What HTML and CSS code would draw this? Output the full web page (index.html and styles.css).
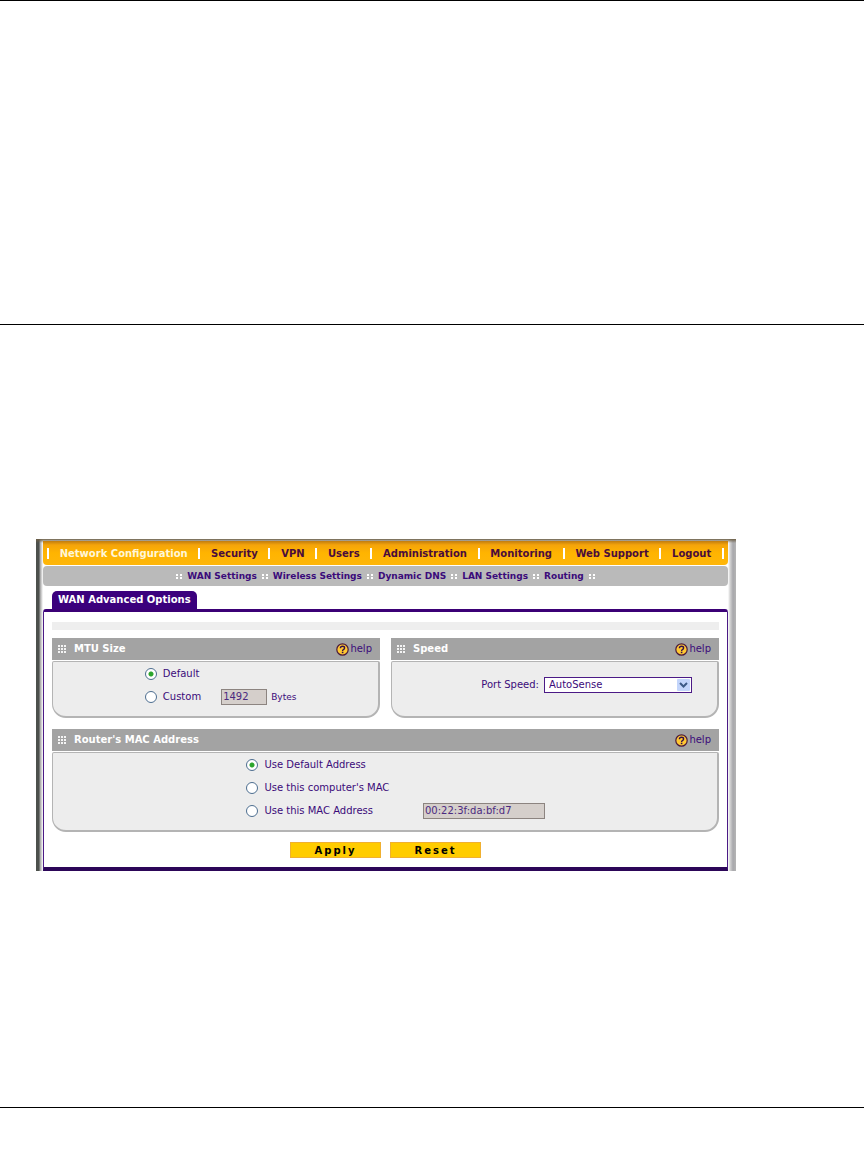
FILE: index.html
```html
<!DOCTYPE html>
<html lang="en">
<head>
    <meta charset="UTF-8">
    <meta name="viewport" content="width=device-width, initial-scale=1.0">
    <link rel="stylesheet" href="styles.css">
    <title>WAN Advanced Options</title>
</head>
<body>
    <svg class="sprites" aria-hidden="true">
        <symbol id="help-icon" viewBox="0 0 13 13">
            <circle cx="6.5" cy="6.5" r="5.7" fill="#ffc832" stroke="#4a1a3c" stroke-width="1.2"/>
            <path d="M4.4 5.2 Q4.4 3.3 6.5 3.3 Q8.6 3.3 8.6 5 Q8.6 6 7.5 6.5 Q6.6 7 6.6 7.9" fill="none" stroke="#33104a" stroke-width="1.4"/>
            <rect x="5.8" y="8.7" width="1.6" height="1.5" fill="#33104a"/>
        </symbol>
        <symbol id="grip-icon" viewBox="0 0 8 8">
            <path d="M0 1h2M3 1h2M6 1h2M0 4h2M3 4h2M6 4h2M0 7h2M3 7h2M6 7h2" stroke="#f4f4f4" stroke-width="2"/>
        </symbol>
        <symbol id="dots-icon" viewBox="0 0 6 5">
            <path d="M0 1h2M4 1h2M0 4h2M4 4h2" stroke="#fff" stroke-width="2"/>
        </symbol>
    </svg>

    <div class="section top-section"></div>
    <div class="section main-section">
        <div class="frame">
            <nav class="menu">
                <a href="#" class="active">Network Configuration</a>
                <a href="#">Security</a>
                <a href="#">VPN</a>
                <a href="#">Users</a>
                <a href="#">Administration</a>
                <a href="#">Monitoring</a>
                <a href="#">Web Support</a>
                <a href="#">Logout</a>
            </nav>
            <nav class="submenu">
                <svg class="dots"><use href="#dots-icon"/></svg>
                <a href="#">WAN Settings</a>
                <svg class="dots"><use href="#dots-icon"/></svg>
                <a href="#">Wireless Settings</a>
                <svg class="dots"><use href="#dots-icon"/></svg>
                <a href="#">Dynamic DNS</a>
                <svg class="dots"><use href="#dots-icon"/></svg>
                <a href="#">LAN Settings</a>
                <svg class="dots"><use href="#dots-icon"/></svg>
                <a href="#">Routing</a>
                <svg class="dots"><use href="#dots-icon"/></svg>
            </nav>
            <h1 class="tab">WAN Advanced Options</h1>
            <form class="panel">
                <div class="message"></div>
                <div class="cards">
                    <div class="card">
                        <div class="card-head">
                            <svg class="grip"><use href="#grip-icon"/></svg>
                            <h2>MTU Size</h2>
                            <a href="#" class="help"><svg><use href="#help-icon"/></svg>help</a>
                        </div>
                        <div class="card-body mtu">
                            <div class="row">
                                <input type="radio" name="mtu" id="mtu-default" checked>
                                <label for="mtu-default">Default</label>
                            </div>
                            <div class="row">
                                <input type="radio" name="mtu" id="mtu-custom">
                                <label for="mtu-custom">Custom</label>
                                <input type="text" id="mtu-bytes" class="field" value="1492" disabled>
                                <label for="mtu-bytes" class="unit">Bytes</label>
                            </div>
                        </div>
                    </div>
                    <div class="card">
                        <div class="card-head">
                            <svg class="grip"><use href="#grip-icon"/></svg>
                            <h2>Speed</h2>
                            <a href="#" class="help"><svg><use href="#help-icon"/></svg>help</a>
                        </div>
                        <div class="card-body speed">
                            <label for="port-speed">Port Speed:</label>
                            <div class="select">
                                <select id="port-speed">
                                    <option>AutoSense</option>
                                </select>
                                <svg class="arrow" viewBox="0 0 13 12">
                                    <rect width="13" height="12" rx="1" fill="#c3d5fb"/>
                                    <path d="M3 4l3.5 3.5L10 4" fill="none" stroke="#3d5a86" stroke-width="2"/>
                                </svg>
                            </div>
                        </div>
                    </div>
                    <div class="card wide">
                        <div class="card-head">
                            <svg class="grip"><use href="#grip-icon"/></svg>
                            <h2>Router's MAC Address</h2>
                            <a href="#" class="help"><svg><use href="#help-icon"/></svg>help</a>
                        </div>
                        <div class="card-body mac">
                            <div class="row">
                                <input type="radio" name="mac" id="mac-default" checked>
                                <label for="mac-default">Use Default Address</label>
                            </div>
                            <div class="row">
                                <input type="radio" name="mac" id="mac-computer">
                                <label for="mac-computer">Use this computer's MAC</label>
                            </div>
                            <div class="row">
                                <input type="radio" name="mac" id="mac-custom">
                                <label for="mac-custom">Use this MAC Address</label>
                                <input type="text" class="field" aria-label="MAC address" value="00:22:3f:da:bf:d7" disabled>
                            </div>
                        </div>
                    </div>
                </div>
                <div class="buttons">
                    <button type="button">Apply</button>
                    <button type="reset">Reset</button>
                </div>
            </form>
        </div>
    </div>
    <div class="section"></div>
</body>
</html>
```
FILE: styles.css
```css
*{
    margin: 0;
    padding: 0;
    box-sizing: border-box;
}
body{
    background-color: white;
    color: #3b0b7a;
    font-family: Verdana, "DejaVu Sans", sans-serif;
    font-size: 10px;
    line-height: 14px;
}
a{
    color: inherit;
    text-decoration: none;
}
.sprites{
    display: none;
}
.section{
    border-top: 1px solid black;
}
.top-section{
    padding-top: 323px;
}
.main-section{
    padding: 214px 128px 236px 36px;
}
.frame{
    padding: 2px 8px 0 7px;
    background:
        linear-gradient(#6d6048, rgba(160, 150, 130, 0)) top / 100% 4px no-repeat,
        linear-gradient(to right, #4c504c 3px, #a0a0a0 4px, #fff 7px) left / 7px 100% no-repeat,
        linear-gradient(to right, #fff, #d4d4d4 2px, #a8a8ac 5px, #b4b4b4) right / 8px 100% no-repeat;
}
.menu{
    display: flex;
    justify-content: space-between;
    align-items: center;
    height: 24px;
    padding: 0 4px;
    border-radius: 0 0 4px 4px;
    background: linear-gradient(#c07c10, #f5a40a 4px, #ffb400 12px, #ffb60a);
    color: #4a0c3c;
    font-weight: bold;
}
.menu a{
    flex-grow: 1;
    border-left: 2px solid white;
    line-height: 11px;
    text-align: center;
}
.menu a:last-child{
    border-right: 2px solid white;
}
.menu .active{
    color: #fff6d8;
}
.submenu{
    display: flex;
    justify-content: center;
    align-items: center;
    gap: 5px;
    height: 20px;
    margin-top: 1px;
    border-radius: 4px;
    background-color: #bababa;
    font-size: 9px;
    font-weight: bold;
}
.dots{
    width: 6px;
    height: 5px;
}
.tab{
    width: fit-content;
    margin: 5px 0 0 9px;
    padding: 0 6px;
    border-radius: 5px 5px 0 0;
    background-color: #3b007d;
    color: white;
    font-size: 10px;
    line-height: 18px;
}
.panel{
    padding: 10px 8px 9px;
    border: 1px solid #4b1a86;
    border-top: 3px solid #3b0076;
    border-bottom: 4px solid #2c0658;
    border-radius: 3px 3px 0 0;
    background-color: white;
}
.message{
    height: 8px;
    background-color: #eee;
}
.cards{
    display: grid;
    grid-template-columns: 1fr 1fr;
    gap: 11px;
    margin-top: 8px;
}
.wide{
    grid-column: span 2;
}
.card{
    display: flex;
    flex-direction: column;
}
.card-head{
    display: flex;
    align-items: center;
    height: 22px;
    padding: 0 8px 0 6px;
    background-color: #a3a3a3;
}
.card-head h2{
    margin-left: 8px;
    color: white;
    font-size: 10px;
}
.grip{
    width: 8px;
    height: 8px;
}
.help{
    display: flex;
    align-items: center;
    gap: 1px;
    margin-left: auto;
}
.help svg{
    width: 13px;
    height: 13px;
}
.card-body{
    flex-grow: 1;
    margin-top: 1px;
    border: 1px solid #b4b4b4;
    border-width: 1px 2px 2px 1px;
    border-radius: 2px 2px 14px 14px;
    background-color: #ededed;
}
.mtu{
    padding: 0 0 8px 28%;
}
.mac{
    padding: 0 0 8px 29%;
}
.row{
    display: flex;
    align-items: center;
    height: 23px;
}
.row label{
    margin-left: 6px;
}
input[type="radio"]{
    appearance: none;
    width: 12px;
    height: 12px;
    border: 1px solid #4d6e90;
    border-radius: 50%;
    background-color: white;
}
input[type="radio"]:checked{
    background: radial-gradient(circle, #2ca52c 2px, #fff 3px);
}
.field{
    width: 46px;
    height: 16px;
    padding-left: 1px;
    border: 1px solid #8c8480;
    background-color: #d5cfcb;
    color: #4b2a80;
    font: inherit;
}
.mtu .field{
    margin-left: 20px;
}
.mac .field{
    width: 122px;
    margin-left: 50px;
}
.row .unit{
    margin-left: 4px;
    font-size: 9px;
}
.speed{
    display: flex;
    justify-content: flex-end;
    align-items: center;
    gap: 5px;
    padding: 0 25px 8px 0;
}
.select{
    position: relative;
    width: 148px;
}
select{
    display: block;
    appearance: none;
    width: 100%;
    height: 16px;
    padding: 0 16px 0 4px;
    border: 1px solid #4b1a86;
    border-radius: 0;
    background-color: white;
    color: inherit;
    font: inherit;
}
.arrow{
    position: absolute;
    top: 2px;
    right: 2px;
    width: 13px;
    height: 12px;
    pointer-events: none;
}
.buttons{
    display: flex;
    justify-content: center;
    gap: 9px;
    margin-top: 10px;
}
button{
    width: 91px;
    height: 16px;
    border: 1px solid #f0b030;
    background-color: #ffcc00;
    color: black;
    font-family: inherit;
    font-size: 10px;
    font-weight: bold;
    letter-spacing: 2px;
    cursor: pointer;
}
button:hover{
    background-color: #ffb400;
}
```
